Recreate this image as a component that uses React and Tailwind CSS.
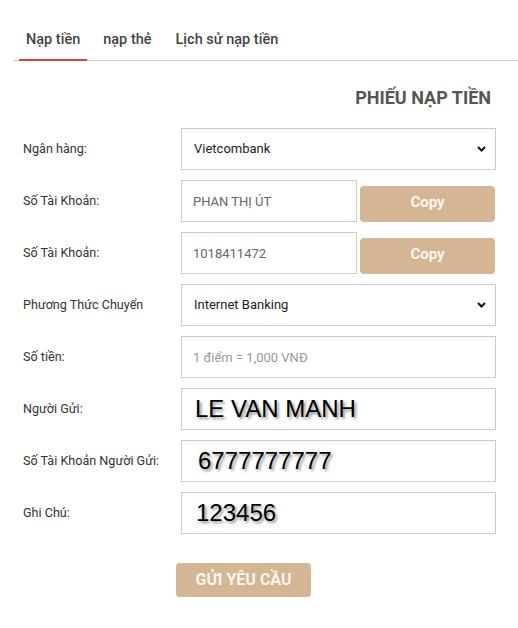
import React from "react";

const labelCls = "w-[158px] shrink-0 text-[12.6px] text-[#333]";
const boxCls =
  "h-[42px] border border-[#ccc] bg-white outline-none text-[13px] font-['Roboto',sans-serif]";
const bigCls =
  "h-[42px] w-[315px] border border-[#ccc] bg-white outline-none pl-[13px] text-[24px] text-black font-['Liberation_Sans',Arial,sans-serif] [text-shadow:2px_2px_3px_rgba(0,0,0,0.45)]";

const Chevron = () => (
  <svg
    className="pointer-events-none absolute right-[10px] top-[18px]"
    width="9"
    height="6"
    viewBox="0 0 9 6"
  >
    <path d="M1 1l3.5 3.5L8 1" fill="none" stroke="#111" strokeWidth="2" />
  </svg>
);

const SelectBox = ({ value }) => (
  <div className="relative w-[315px]">
    <select
      defaultValue={value}
      className={`${boxCls} w-full appearance-none pl-[12px] text-[#222]`}
    >
      <option>{value}</option>
    </select>
    <Chevron />
  </div>
);

const Row = ({ label, children }) => (
  <div className="flex items-center">
    <div className={labelCls}>{label}</div>
    {children}
  </div>
);

const CopyRow = ({ label, value }) => (
  <div className="flex items-center">
    <div className={labelCls}>{label}</div>
    <input
      readOnly
      defaultValue={value}
      className={`${boxCls} w-[176px] px-[11px] text-[#666]`}
    />
    <button className="ml-[3px] mt-[6px] h-[36px] w-[135px] rounded-[4px] bg-[#d4b594] pb-[4px] text-[15px] font-bold text-[#fdf7f0]">
      Copy
    </button>
  </div>
);

export default function App() {
  return (
    <div className="w-[518px] h-[628px] bg-white font-['Roboto',sans-serif] text-[#444]">
      <div className="ml-[13px] flex border-b border-[#ccc] pl-[6px]">
        <div className="-mb-px border-b-2 border-[#d9413b] px-[7px] pt-[29px] pb-[8px] text-[14.5px] font-medium leading-[22px] text-[#444]">
          Nạp tiền
        </div>
        <div className="ml-[9px] px-[7px] pt-[29px] pb-[8px] text-[14.5px] font-medium leading-[22px] text-[#444]">
          nạp thẻ
        </div>
        <div className="ml-[10px] px-[7px] pt-[29px] pb-[8px] text-[14.5px] font-medium leading-[22px] text-[#444]">
          Lịch sử nạp tiền
        </div>
      </div>

      <div className="pl-[23px] pr-[22px]">
        <h2 className="mt-[25px] pr-[5px] text-right text-[18px] font-bold leading-[24px] text-[#555]">
          PHIẾU NẠP TIỀN
        </h2>

        <div className="mt-[18px] flex flex-col gap-[10px]">
          <Row label="Ngân hàng:">
            <SelectBox value="Vietcombank" />
          </Row>
          <CopyRow label="Số Tài Khoản:" value="PHAN THỊ ÚT" />
          <CopyRow label="Số Tài Khoản:" value="1018411472" />
          <Row label="Phương Thức Chuyển">
            <SelectBox value="Internet Banking" />
          </Row>
          <Row label="Số tiền:">
            <input
              placeholder="1 điểm = 1,000 VNĐ"
              className={`${boxCls} w-[315px] px-[11px] text-[#333] placeholder:text-[#999]`}
            />
          </Row>
          <Row label="Người Gửi:">
            <input readOnly defaultValue="LE VAN MANH" className={bigCls} />
          </Row>
          <Row label="Số Tài Khoản Người Gửi:">
            <input readOnly defaultValue="6777777777" className={`${bigCls} pl-[16px]`} />
          </Row>
          <Row label="Ghi Chú:">
            <input readOnly defaultValue="123456" className={`${bigCls} pl-[14px]`} />
          </Row>
        </div>

        <button className="mt-[29px] ml-[153px] h-[34px] w-[135px] rounded-[4px] bg-[#d4b594] text-[16px] font-bold text-[#fdf7f0]">
          GỬI YÊU CẦU
        </button>
      </div>
    </div>
  );
}
